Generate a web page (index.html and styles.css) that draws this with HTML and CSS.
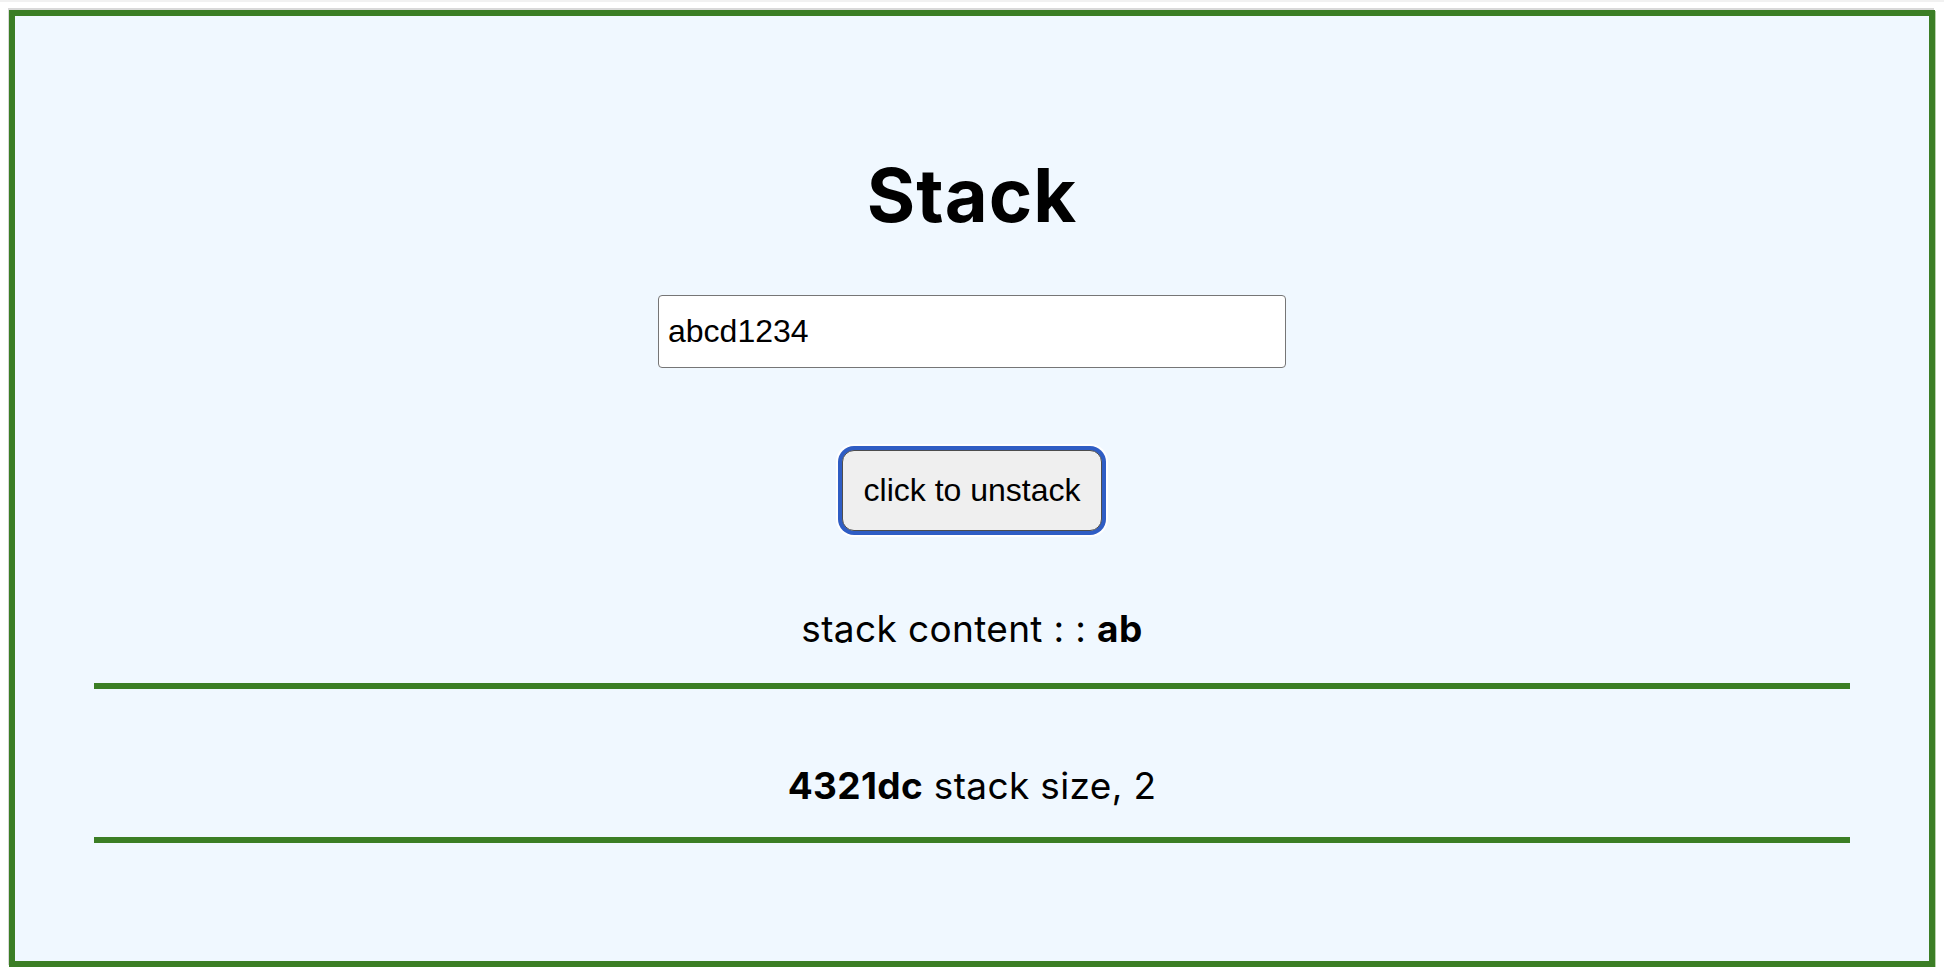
FILE: index.html
```html
<!DOCTYPE html>
<html>
<head>
<meta charset="utf-8">
<title>Stack</title>
<link rel="stylesheet" href="styles.css">
</head>
<body>
<div class="topstrip"></div>
<main class="box">
  <h1 class="title">Stack</h1>
  <input class="field" type="text" value="abcd1234">
  <button class="btn" type="button">click to unstack</button>
  <p class="line line-content">stack content : : <b>ab</b></p>
  <div class="rule rule-1"></div>
  <p class="line line-size"><b>4321dc</b> stack size, 2</p>
  <div class="rule rule-2"></div>
</main>
</body>
</html>
```
FILE: styles.css
```css
html, body {
  margin: 0;
  padding: 0;
  background: #ffffff;
}
body {
  padding: 0 8px 0 8px;
  font-family: Inter, "Noto Sans", sans-serif;
  color: #000;
}
.topstrip {
  height: 2px;
  margin: 0 -8px 8px -8px;
  background: #f1f1f1;
}
.box {
  margin: 2px 0 0 1px;
  width: 1926px;
  box-sizing: border-box;
  border: 6px solid #3b7e25;
  background: #f0f8ff;
  box-shadow: -1px -2px 0 #d9d9d9, 1px 1px 0 #b9d3ad;
  display: flex;
  flex-direction: column;
  align-items: center;
  padding: 135px 0 118px 0;
}
.title {
  margin: 0;
  font-size: 74px;
  line-height: 88px;
  font-weight: 700;
  letter-spacing: 1px;
}
.field {
  margin: 56px 0 0 0;
  width: 628px;
  height: 73px;
  box-sizing: border-box;
  padding: 0 9px;
  border: 1px solid #767676;
  border-radius: 4px;
  background: #fff;
  font-family: "Liberation Sans", Arial, sans-serif;
  font-size: 32px;
  color: #000;
  outline: none;
}
.btn {
  margin: 82px 0 0 0;
  height: 81px;
  box-sizing: border-box;
  padding: 0 21px;
  border: 1px solid #4d4d4d;
  border-radius: 12px;
  background: #efefef;
  font-family: "Liberation Sans", Arial, sans-serif;
  font-size: 32px;
  color: #000;
  box-shadow: 0 0 0 4px #2f5dc4, 0 0 0 6px #ffffff;
}
.line {
  margin: 0;
  font-size: 37px;
  line-height: 44px;
  letter-spacing: 0.35px;
}
.line-content {
  margin-top: 76px;
}
.line-size {
  margin-top: 75px;
}
.line b {
  font-weight: 700;
}
.rule {
  align-self: stretch;
  margin: 0 79px;
  height: 6px;
  background: #3b7e25;
}
.rule-1 {
  margin-top: 32px;
}
.rule-2 {
  margin-top: 29px;
}
```
